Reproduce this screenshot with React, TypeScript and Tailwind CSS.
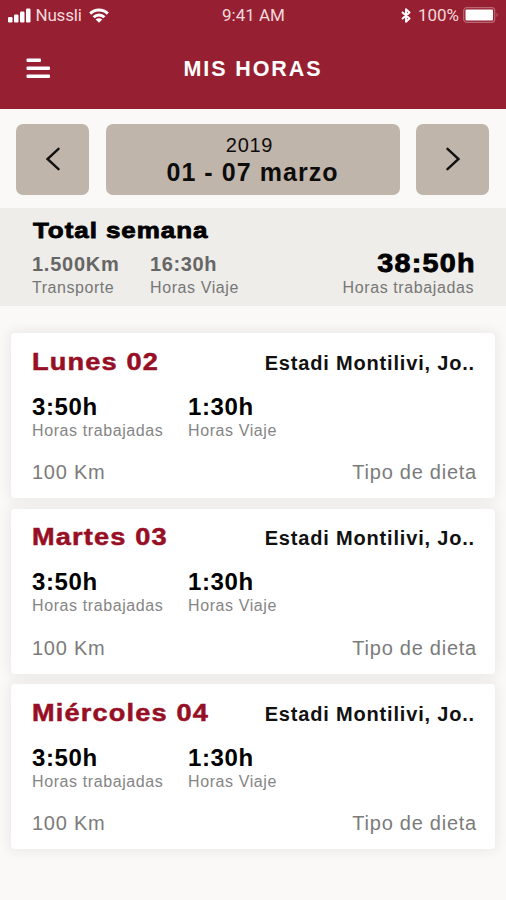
import React from "react";

const days = [
  { name: "Lunes 02", place: "Estadi Montilivi, Jo..", worked: "3:50h", travel: "1:30h", km: "100 Km", diet: "Tipo de dieta" },
  { name: "Martes 03", place: "Estadi Montilivi, Jo..", worked: "3:50h", travel: "1:30h", km: "100 Km", diet: "Tipo de dieta" },
  { name: "Miércoles 04", place: "Estadi Montilivi, Jo..", worked: "3:50h", travel: "1:30h", km: "100 Km", diet: "Tipo de dieta" },
];

function StatusBar() {
  return (
    <div className="grid grid-cols-3 items-center h-[30px] pl-2 pr-[7px] font-['Roboto',sans-serif] text-[17px] leading-[30px] text-[#f3d9dc]">
      <div className="flex items-center">
        <svg width="23" height="15" viewBox="0 0 23 15" fill="#fff">
          <rect x="0" y="9" width="4.5" height="5.5" rx="1.2" />
          <rect x="6" y="6.5" width="4.5" height="8" rx="1.2" />
          <rect x="12" y="3.5" width="4.5" height="11" rx="1.2" />
          <rect x="18" y=".5" width="4.5" height="14" rx="1.2" />
        </svg>
        <span className="ml-[4.5px] tracking-[-0.2px]">Nussli</span>
        <svg className="ml-[7.5px]" width="20" height="15" viewBox="0 0 20 15" fill="none" stroke="#fff" strokeWidth="2.9">
          <path d="M1.2 5.6C6 .8 14 .8 18.8 5.6" />
          <path d="M4.6 9.2c3-3 7.8-3 10.8 0" />
          <path d="M10 14.8L6.7 11.6c1.8-1.7 4.8-1.7 6.6 0z" fill="#fff" stroke="none" />
        </svg>
      </div>
      <div className="text-center">9:41 AM</div>
      <div className="flex items-center justify-end">
        <svg width="10" height="15" viewBox="0 0 10 15" fill="none" stroke="#fff" strokeWidth="1.9" strokeLinejoin="round">
          <path d="M1 4l7.5 6.5L5 13.8V1.2l3.5 3.3L1 11" />
        </svg>
        <span className="ml-[7px]">100%</span>
        <svg className="ml-[4px]" width="36" height="16" viewBox="0 0 36 16">
          <rect x=".7" y=".7" width="31" height="14.6" rx="3" fill="none" stroke="#b96773" strokeWidth="1.2" />
          <rect x="2.5" y="2.5" width="27.5" height="11" rx="1" fill="#fff" />
          <path d="M33.5 6c1.6.5 1.6 3.5 0 4z" fill="#b96773" />
        </svg>
      </div>
    </div>
  );
}

function Header() {
  return (
    <header className="h-[109px] bg-[#971f32]">
      <StatusBar />
      <div className="grid grid-cols-[60px_1fr_60px] items-center h-[78px]">
        <button className="pl-[26px]">
          <svg width="25" height="22" viewBox="0 0 25 22" fill="#fff">
            <rect x=".5" y=".5" width="14.5" height="3.5" rx="1" />
            <rect x=".5" y="8.5" width="23.5" height="3.5" rx="1" />
            <rect x=".5" y="16.5" width="23.5" height="3.5" rx="1" />
          </svg>
        </button>
        <h1 className="text-center text-[21.5px] font-bold tracking-[1.9px] text-white">MIS HORAS</h1>
      </div>
    </header>
  );
}

function WeekPicker() {
  return (
    <div className="grid grid-cols-[73px_1fr_73px] gap-[16.5px] h-[99px] pl-4 pr-[17px] pt-[14.5px] pb-[13.5px]">
      <button className="flex items-center justify-center rounded-[7px] bg-[#c0b5aa]">
        <svg width="14" height="24" viewBox="0 0 14 24" fill="none" stroke="#111" strokeWidth="2.4" strokeLinecap="round">
          <path d="M12.5 1.8L1.5 12l11 10.2" />
        </svg>
      </button>
      <div className="rounded-[7px] bg-[#c0b5aa] pt-2 text-center text-[#0d0c0b]">
        <div className="text-[20px] leading-[26px] tracking-[0.7px] pr-1.5">2019</div>
        <div className="text-[25px] leading-[29px] font-bold tracking-[1.05px]">01 - 07 marzo</div>
      </div>
      <button className="flex items-center justify-center rounded-[7px] bg-[#c0b5aa]">
        <svg width="14" height="24" viewBox="0 0 14 24" fill="none" stroke="#111" strokeWidth="2.4" strokeLinecap="round">
          <path d="M1.5 1.8L12.5 12l-11 10.2" />
        </svg>
      </button>
    </div>
  );
}

function WeekTotal() {
  return (
    <section className="h-[98px] bg-[#eeede9] pt-2 pl-[32px] pr-[31px]">
      <h2 className="ml-px w-fit origin-left scale-x-[1.18] text-[22px] leading-[29px] font-bold tracking-[0.8px] text-black [-webkit-text-stroke:0.8px_#000]">
        Total semana
      </h2>
      <div className="mt-[5px] flex text-[#777]">
        <div className="w-[118px]">
          <div className="text-[20px] leading-[29px] font-bold tracking-[0.75px] text-[#666]">1.500Km</div>
          <div className="-mt-px text-[16px] leading-[20px] tracking-[0.55px]">Transporte</div>
        </div>
        <div>
          <div className="text-[20px] leading-[29px] font-bold tracking-[0.6px] text-[#666]">16:30h</div>
          <div className="-mt-px text-[16px] leading-[20px] tracking-[0.6px]">Horas Viaje</div>
        </div>
        <div className="ml-auto flex flex-col items-end">
          <div className="mr-[-1px] mb-[2px] origin-right scale-x-[1.15] text-[25px] leading-[26px] font-bold tracking-[1.1px] text-black [-webkit-text-stroke:0.8px_#000]">
            38:50h
          </div>
          <div className="mr-px text-[16px] leading-[20px] tracking-[0.6px]">Horas trabajadas</div>
        </div>
      </div>
    </section>
  );
}

function DayCard({ day }: { day: (typeof days)[number] }) {
  return (
    <div className="h-[165px] rounded-[4px] bg-white pt-[14.5px] pl-[21px] pr-[18px] shadow-[0_0_12px_3px_rgba(0,0,0,0.06)]">
      <div className="flex justify-between">
        <h3 className="origin-left scale-x-[1.18] text-[23px] leading-[28px] font-bold tracking-[1px] text-[#970f25] [-webkit-text-stroke:0.5px_#970f25]">
          {day.name}
        </h3>
        <div className="pt-px pr-[2px] text-[20px] leading-[28px] font-bold tracking-[0.82px] text-[#111]">{day.place}</div>
      </div>
      <div className="mt-[16px] flex text-[#858585]">
        <div className="w-[156px]">
          <div className="text-[24px] leading-[28px] font-bold tracking-[0.6px] text-black">{day.worked}</div>
          <div className="-mt-px text-[16px] leading-[22px] tracking-[0.6px]">Horas trabajadas</div>
        </div>
        <div>
          <div className="text-[24px] leading-[28px] font-bold tracking-[0.6px] text-black">{day.travel}</div>
          <div className="-mt-px text-[16px] leading-[22px] tracking-[0.6px]">Horas Viaje</div>
        </div>
      </div>
      <div className="mt-[16.5px] flex justify-between text-[20px] leading-[28px] tracking-[0.75px] text-[#7b7b7b]">
        <span>{day.km}</span>
        <span>{day.diet}</span>
      </div>
    </div>
  );
}

export default function App() {
  return (
    <div className="w-full h-[900px] overflow-hidden bg-[#faf9f7] font-['Liberation_Sans',Arial,sans-serif]">
      <Header />
      <WeekPicker />
      <WeekTotal />
      <div className="flex flex-col gap-[10.5px] pt-[27px] px-[11px]">
        {days.map((day) => (
          <DayCard key={day.name} day={day} />
        ))}
      </div>
    </div>
  );
}
